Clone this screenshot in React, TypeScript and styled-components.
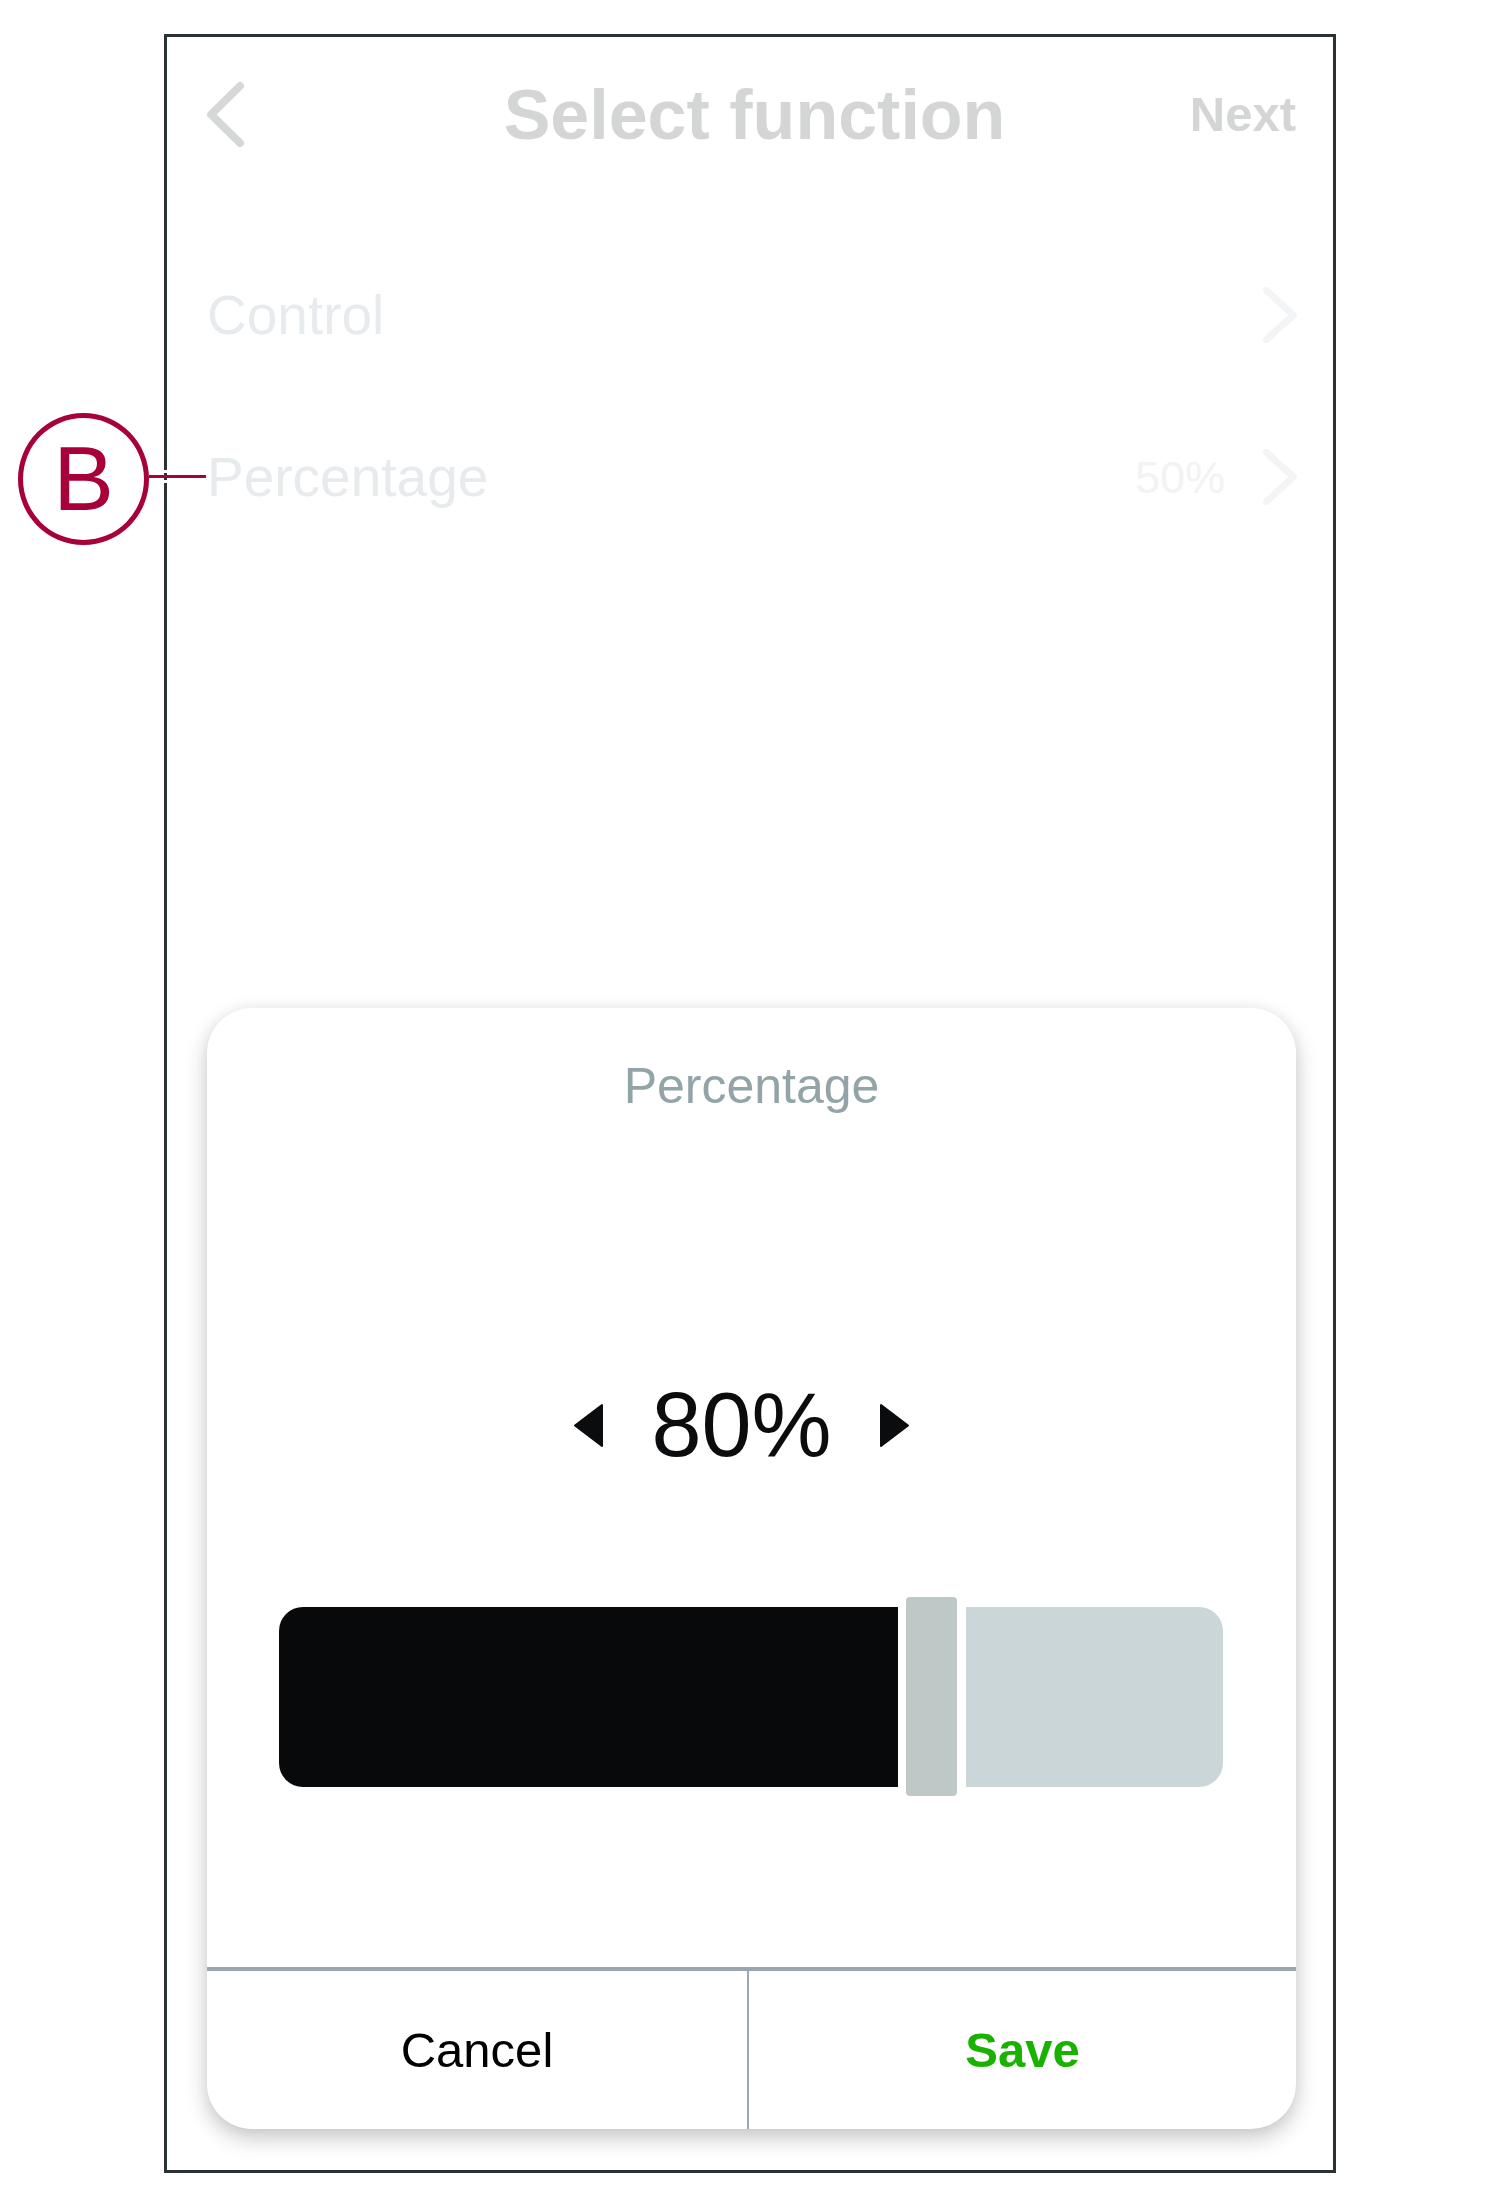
import React from "react";
import styled, { createGlobalStyle } from "styled-components";

const GlobalStyle = createGlobalStyle`
  html, body {
    margin: 0;
    padding: 0;
    background: #ffffff;
  }
  body {
    font-family: "Liberation Sans", Arial, Helvetica, sans-serif;
  }
  * { box-sizing: border-box; }
`;

const Page = styled.div`
  position: relative;
  width: 1500px;
  height: 2208px;
  padding: 34px 0 0 164px;
  background: #ffffff;
`;

const Frame = styled.div`
  width: 1172px;
  height: 2139px;
  border: 3px solid #2b3235;
  display: flex;
  flex-direction: column;
  background: #ffffff;
`;

const Header = styled.header`
  height: 155px;
  display: grid;
  grid-template-columns: 1fr auto 1fr;
  align-items: center;
  padding: 0 37px 0 36px;
`;

const BackButton = styled.button`
  justify-self: start;
  background: none;
  border: none;
  padding: 0;
  display: flex;
  cursor: pointer;
`;

const Title = styled.h1`
  margin: 0;
  font-size: 70px;
  line-height: 1;
  font-weight: 700;
  color: #d4d6d5;
  position: relative;
  left: 5px;
`;

const NextButton = styled.button`
  justify-self: end;
  background: none;
  border: none;
  padding: 0;
  font-family: inherit;
  font-size: 49px;
  line-height: 1;
  font-weight: 700;
  color: #d4d6d5;
  cursor: pointer;
`;

const List = styled.div`
  padding-top: 42px;
  display: flex;
  flex-direction: column;
`;

const Row = styled.div`
  height: 162px;
  display: flex;
  align-items: center;
  padding: 0 36px 0 40px;
`;

const RowLabel = styled.span`
  flex: 1;
  font-size: 55px;
  line-height: 1;
  color: #e8ebed;
`;

const RowValue = styled.span`
  font-size: 45px;
  line-height: 1;
  color: #f1f3f4;
  margin-right: 38px;
`;

const Chevron = styled.svg`
  display: block;
  flex: none;
`;

const Card = styled.section`
  margin: auto 0 41px 40px;
  width: 1089px;
  height: 1121px;
  border-radius: 45px;
  background: #ffffff;
  box-shadow: 0 9px 22px rgba(0, 0, 0, 0.22), 0 0 14px rgba(0, 0, 0, 0.04);
  display: flex;
  flex-direction: column;
  overflow: hidden;
`;

const CardTitle = styled.h2`
  margin: 0;
  padding-top: 53px;
  font-size: 50px;
  line-height: 1;
  font-weight: 400;
  text-align: center;
  color: #93a4a9;
`;

const ValueRow = styled.div`
  margin-top: 269px;
  height: 90px;
  display: flex;
  align-items: center;
  justify-content: center;
  gap: 47px;
  padding-right: 20px;
`;

const StepButton = styled.button`
  background: none;
  border: none;
  padding: 0;
  display: flex;
  cursor: pointer;
`;

const ValueText = styled.span`
  font-size: 90px;
  line-height: 1;
  color: #0b0c0e;
`;

const Slider = styled.div`
  margin: 127px 73px 0 72px;
  height: 199px;
  display: flex;
  align-items: center;
`;

const SliderFill = styled.div`
  height: 180px;
  background: #08090b;
  border-radius: 24px 0 0 24px;
  flex: none;
`;

const SliderThumb = styled.div`
  width: 51px;
  height: 199px;
  margin: 0 9px 0 8px;
  background: #bdc8c7;
  border-radius: 4px;
  flex: none;
`;

const SliderRest = styled.div`
  flex: 1;
  height: 180px;
  background: #cad6d8;
  border-radius: 0 24px 24px 0;
`;

const Footer = styled.footer`
  margin-top: auto;
  height: 162px;
  border-top: 4px solid #97a7ab;
  display: flex;
`;

const FooterButton = styled.button<{ $primary?: boolean }>`
  flex: ${(p) => (p.$primary ? "1" : "0 0 540px")};
  background: none;
  border: none;
  border-left: ${(p) => (p.$primary ? "2px solid #9aa9ad" : "none")};
  padding: 0;
  font-family: inherit;
  font-size: 49px;
  line-height: 1;
  font-weight: ${(p) => (p.$primary ? 700 : 400)};
  color: ${(p) => (p.$primary ? "#19b200" : "#000000")};
  cursor: pointer;
`;

const CalloutCircle = styled.div`
  position: absolute;
  left: 18px;
  top: 413px;
  width: 131px;
  height: 132px;
  border: 5px solid #a8003b;
  border-radius: 50%;
  display: flex;
  align-items: center;
  justify-content: center;
  font-size: 91px;
  line-height: 1;
  color: #a8003b;
  padding-bottom: 2px;
`;

const CalloutLine = styled.div`
  position: absolute;
  left: 149px;
  top: 475px;
  width: 57px;
  height: 3px;
  background: #a8003b;
  box-shadow: 0 -5px 0 #ffffff, 0 5px 0 #ffffff;
`;

const BackIcon = () => (
  <Chevron width="45" height="73" viewBox="0 0 45 73">
    <path
      d="M37 8 L8 36.5 L37 65"
      fill="none"
      stroke="#d6d8d8"
      strokeWidth="8"
      strokeLinecap="round"
      strokeLinejoin="round"
    />
  </Chevron>
);

const RowChevron = () => (
  <Chevron width="34" height="56" viewBox="0 0 34 56">
    <path
      d="M3.5 3.5 L30.5 28 L3.5 52.5"
      fill="none"
      stroke="#f3f4f6"
      strokeWidth="7"
      strokeLinecap="round"
      strokeLinejoin="round"
    />
  </Chevron>
);

const Triangle = ({ dir }: { dir: "left" | "right" }) => (
  <Chevron width="31" height="45" viewBox="0 0 31 45">
    <path
      d={dir === "left" ? "M29 2 L29 43 L2 22.5 Z" : "M2 2 L2 43 L29 22.5 Z"}
      fill="#0b0c0e"
      stroke="#0b0c0e"
      strokeWidth="2"
      strokeLinejoin="round"
    />
  </Chevron>
);

export default function App() {
  const fillWidth = 619;
  return (
    <>
      <GlobalStyle />
      <Page>
        <Frame>
          <Header>
            <BackButton aria-label="Back">
              <BackIcon />
            </BackButton>
            <Title>Select function</Title>
            <NextButton>Next</NextButton>
          </Header>
          <List>
            <Row>
              <RowLabel>Control</RowLabel>
              <RowChevron />
            </Row>
            <Row>
              <RowLabel>Percentage</RowLabel>
              <RowValue>50%</RowValue>
              <RowChevron />
            </Row>
          </List>
          <Card>
            <CardTitle>Percentage</CardTitle>
            <ValueRow>
              <StepButton aria-label="Decrease">
                <Triangle dir="left" />
              </StepButton>
              <ValueText>80%</ValueText>
              <StepButton aria-label="Increase">
                <Triangle dir="right" />
              </StepButton>
            </ValueRow>
            <Slider>
              <SliderFill style={{ width: fillWidth }} />
              <SliderThumb />
              <SliderRest />
            </Slider>
            <Footer>
              <FooterButton>Cancel</FooterButton>
              <FooterButton $primary>Save</FooterButton>
            </Footer>
          </Card>
        </Frame>
        <CalloutLine />
        <CalloutCircle>B</CalloutCircle>
      </Page>
    </>
  );
}
